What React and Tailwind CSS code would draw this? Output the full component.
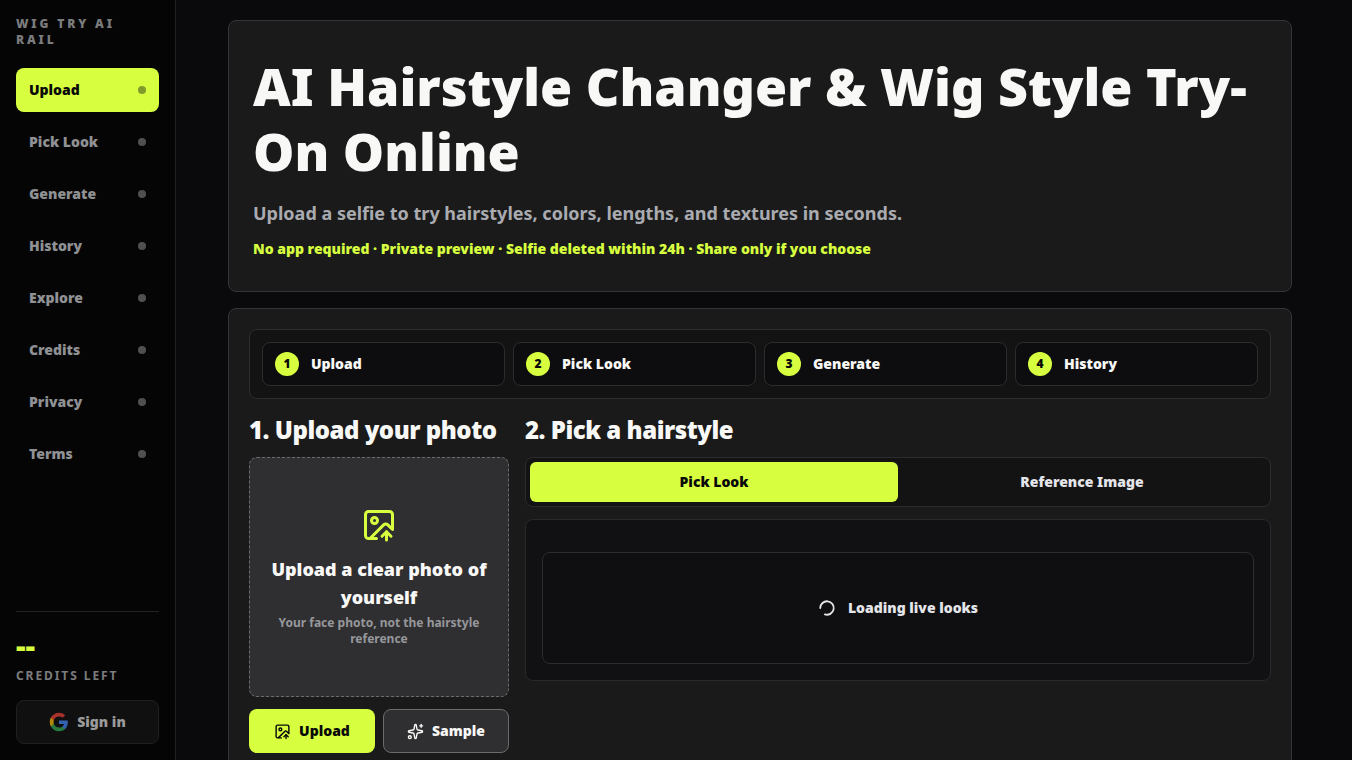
import { ImageUp, Sparkles, LoaderCircle } from "lucide-react";

const navItems = ["Upload", "Pick Look", "Generate", "History", "Explore", "Credits", "Privacy", "Terms"];
const steps = ["Upload", "Pick Look", "Generate", "History"];

function GoogleLogo() {
  return (
    <svg viewBox="-1 -1 26 26" className="size-5" aria-hidden="true">
      <path fill="#4285F4" d="M23.49 12.27c0-.79-.07-1.54-.19-2.27H12v4.51h6.47c-.29 1.48-1.14 2.73-2.4 3.58v3h3.86c2.26-2.09 3.56-5.17 3.56-8.82z" />
      <path fill="#34A853" d="M12 24c3.24 0 5.95-1.08 7.93-2.91l-3.86-3c-1.08.72-2.45 1.16-4.07 1.16-3.13 0-5.78-2.11-6.73-4.96H1.29v3.09C3.26 21.3 7.31 24 12 24z" />
      <path fill="#FBBC05" d="M5.27 14.29c-.25-.72-.38-1.49-.38-2.29s.14-1.57.38-2.29V6.62H1.29C.47 8.24 0 10.06 0 12s.47 3.76 1.29 5.38l3.98-3.09z" />
      <path fill="#EA4335" d="M12 4.75c1.77 0 3.35.61 4.6 1.8l3.42-3.42C17.95 1.19 15.24 0 12 0 7.31 0 3.26 2.7 1.29 6.62l3.98 3.09C6.22 6.86 8.87 4.75 12 4.75z" />
    </svg>
  );
}

function Sidebar() {
  return (
    <aside className="sticky top-0 flex h-screen w-44 shrink-0 flex-col border-r border-[#202021] bg-[#050505] p-4">
      <p className="text-xs font-black tracking-[0.24em] text-[#7b7c7e] uppercase">Wig Try AI Rail</p>
      <nav className="mt-5 flex flex-col gap-2">
        {navItems.map((label, i) => (
          <a
            key={label}
            href="#"
            aria-current={i === 0 ? "page" : undefined}
            className={
              i === 0
                ? "flex h-11 items-center justify-between rounded-lg bg-[#d7ff3f] px-[13px] text-sm font-black text-[#080808]"
                : "flex h-11 items-center justify-between rounded-lg px-[13px] text-sm font-black text-[#8f9194]"
            }
          >
            {label}
            <span className={i === 0 ? "size-2 rounded-full bg-[#819a2b]" : "size-2 rounded-full bg-[#505051]"} />
          </a>
        ))}
      </nav>
      <div className="mt-auto border-t border-[#222223] pt-5">
        <p className="text-3xl leading-7 font-black text-[#d7ff3f]">--</p>
        <p className="mt-2 text-xs font-bold tracking-[0.16em] text-[#7b7c7e] uppercase">Credits left</p>
        <button className="mt-4 flex h-11 w-full items-center justify-center gap-2 rounded-lg border border-[#202021] bg-[#101010] text-sm font-black text-[#9b9b9b]">
          <span className="opacity-70"><GoogleLogo /></span>
          Sign in
        </button>
      </div>
    </aside>
  );
}

export default function App() {
  return (
    <div className="flex min-h-screen items-start bg-[#0a0a0c] font-['Noto_Sans',sans-serif] text-[#f8f8f6]">
      <Sidebar />
      <main className="flex min-w-0 flex-1 flex-col gap-4 py-5 pr-[60px] pl-[52px]">
        <section className="rounded-lg border border-[#353536] bg-[#1a1a1a] px-6 py-8">
          <h1 className="text-[52px] leading-[65px] font-black">AI Hairstyle Changer &amp; Wig Style Try-On Online</h1>
          <p className="mt-4 text-lg leading-7 font-bold text-[#a9abb0]">
            Upload a selfie to try hairstyles, colors, lengths, and textures in seconds.
          </p>
          <p className="mt-3 text-sm leading-5 font-black text-[#d7ff3f]">
            No app required · Private preview · Selfie deleted within 24h · Share only if you choose
          </p>
        </section>

        <section className="rounded-lg border border-[#353536] bg-[#1a1a1a] p-5">
          <ol className="grid grid-cols-4 gap-2 rounded-lg border border-[#2c2c2d] bg-[#131313] p-3">
            {steps.map((label, i) => (
              <li key={label} className="flex h-11 items-center gap-3 rounded-lg border border-[#2c2c2e] bg-[#0d0d0f] px-3 text-sm font-black">
                <span className="flex size-6 items-center justify-center rounded-full bg-[#d7ff3f] text-xs text-[#080808]">{i + 1}</span>
                {label}
              </li>
            ))}
          </ol>

          <div className="mt-4 grid grid-cols-[260px_minmax(0,1fr)] gap-4">
            <div className="flex flex-col gap-3">
              <h2 className="text-2xl leading-[30px] font-black tracking-[-0.02em] whitespace-nowrap">1. Upload your photo</h2>
              <button className="flex h-60 flex-col items-center justify-center rounded-lg border border-dashed border-[#6c6c6e] bg-[#2f2f31] px-4 text-center">
                <ImageUp className="size-9 text-[#d7ff3f]" />
                <span className="mt-3 text-lg leading-7 font-black">Upload a clear photo of yourself</span>
                <span className="mt-1 text-xs font-bold text-[#96979b]">Your face photo, not the hairstyle reference</span>
              </button>
              <div className="grid grid-cols-2 gap-2">
                <button className="flex h-11 items-center justify-center gap-2 rounded-lg bg-[#d7ff3f] text-sm font-black text-[#080808]">
                  <ImageUp className="size-[17px]" />
                  Upload
                </button>
                <button className="flex h-11 items-center justify-center gap-2 rounded-lg border border-[#6c6c6e] bg-[#2f2f31] text-sm font-black">
                  <Sparkles className="size-[17px]" />
                  Sample
                </button>
              </div>
            </div>

            <div className="flex flex-col gap-3">
              <h2 className="text-2xl leading-[30px] font-black tracking-[-0.02em] whitespace-nowrap">2. Pick a hairstyle</h2>
              <div className="grid grid-cols-2 rounded-lg border border-[#2c2c2d] bg-[#131313] p-1">
                <button className="h-10 rounded-md bg-[#d7ff3f] text-sm font-black text-[#080808]">Pick Look</button>
                <button className="h-10 rounded-md text-sm font-black text-[#e4e5ea]">Reference Image</button>
              </div>
              <div className="rounded-lg border border-[#2a2a2c] bg-[#111113] px-4 pt-8 pb-4">
                <div role="status" className="flex h-28 items-center justify-center gap-3 rounded-lg border border-[#2c2c2e] bg-[#0f0f11] text-sm font-black text-[#e4e5ea]">
                  <LoaderCircle className="size-[18px] rotate-180" strokeWidth={2.4} />
                  Loading live looks
                </div>
              </div>
            </div>
          </div>
        </section>
      </main>
    </div>
  );
}
